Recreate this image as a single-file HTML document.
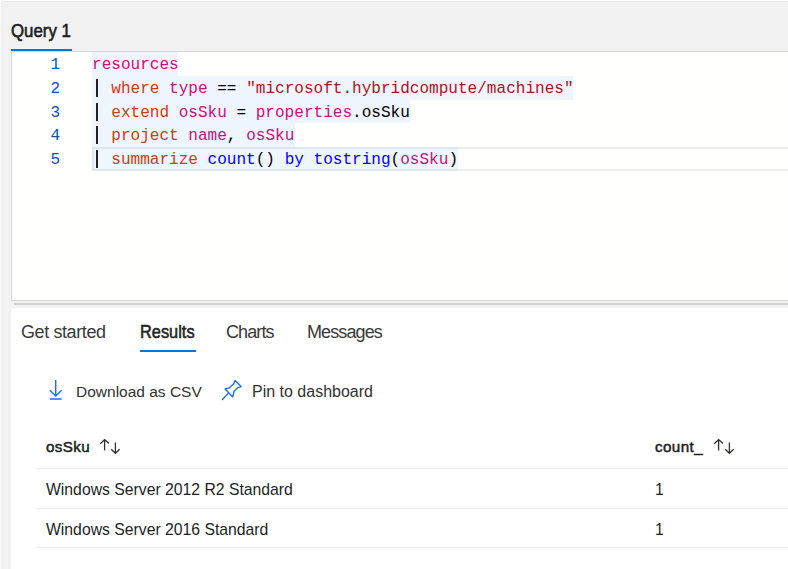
<!DOCTYPE html>
<html><head><meta charset="utf-8">
<style>
*{margin:0;padding:0;box-sizing:border-box}
html,body{width:788px;height:569px;overflow:hidden;background:#f2f2f2;font-family:"Liberation Sans",sans-serif}
.abs{position:absolute}
#topline{left:0;top:0;width:788px;height:1px;background:#fbfbfb}
#topline2{left:0;top:1px;width:788px;height:1px;background:#e9e9e9}
#leftline{left:0;top:0;width:1px;height:569px;background:#fbfbfb}
#qtab{left:11px;top:21px;font-size:18.2px;-webkit-text-stroke:0.6px #201f1e;transform:scaleX(0.925);transform-origin:0 0;color:#201f1e;white-space:nowrap;line-height:20px}
#qbar{left:11px;top:49px;width:61px;height:2px;background:#0078d4}
#editor{left:11px;top:51px;width:800px;height:250px;background:#fffffe;border:1px solid #d6d6d6;border-right:none}
.ln{position:absolute;left:40px;width:20px;text-align:right;font-family:"Liberation Mono",monospace;font-size:16px;color:#0b52b0;line-height:26px;height:24px}
.code{position:absolute;left:92px;font-family:"Liberation Mono",monospace;font-size:16.06px;line-height:26px;height:24px;white-space:pre;color:#000}
.sel{position:absolute;left:92px;background:#eff5fd}
#cur{left:92px;top:147px;width:720px;height:24px;border:2px solid #eeeeee;border-right:none}
.pipe{position:absolute;left:96px;width:2px;height:18px;background:#222}
.k{color:#c8107a}
.o{color:#cc3d0a}
.s{color:#a8161a}
.b{color:#0000ff}
#splitter{left:14px;top:303px;width:780px;height:2px;background:#d2d2d2}
#bottom{left:11px;top:308px;width:800px;height:300px;background:#ffffff}
.tab{position:absolute;top:319px;font-size:18px;letter-spacing:-0.4px;color:#3a3938;white-space:nowrap;line-height:26px}
#rbar{left:140px;top:350px;width:56px;height:2px;background:#0078d4}
.tb{position:absolute;top:382px;font-size:15.5px;color:#323130;white-space:nowrap;line-height:20px}
.th{position:absolute;top:437px;font-size:15.2px;letter-spacing:0.4px;-webkit-text-stroke:0.5px #201f1e;color:#201f1e;white-space:nowrap;line-height:20px}
.td{position:absolute;font-size:15.75px;color:#201f1e;white-space:nowrap;line-height:20px}
.hr{position:absolute;left:36px;width:760px;height:1px;background:#ebebeb}
</style></head><body>
<div id="topline" class="abs"></div>
<div id="topline2" class="abs"></div>
<div id="leftline" class="abs"></div>
<div id="qtab" class="abs">Query 1</div>
<div id="qbar" class="abs"></div>
<div id="editor" class="abs"></div>
<div class="abs" style="left:0;top:0">
  <div class="sel" style="top:52px;width:86px;height:24px"></div>
  <div class="sel" style="top:76px;width:481px;height:24px"></div>
  <div class="sel" style="top:100px;width:318px;height:23px"></div>
  <div class="sel" style="top:123px;width:203px;height:24px"></div>
  <div id="cur" class="abs"></div>
  <div class="sel" style="top:147px;width:366px;height:24px;background:rgba(0,100,230,0.06)"></div>
  <div class="ln" style="top:52px">1</div>
  <div class="ln" style="top:75.75px">2</div>
  <div class="ln" style="top:99.5px">3</div>
  <div class="ln" style="top:123.25px">4</div>
  <div class="ln" style="top:147px">5</div>
  <div class="code" style="top:52px"><span class="k">resources</span></div>
  <div class="code" style="top:75.75px">  <span class="o">where</span> <span class="k">type</span> == <span class="s">"microsoft.hybridcompute/machines"</span></div>
  <div class="code" style="top:99.5px">  <span class="o">extend</span> <span class="k">osSku</span> = <span class="k">properties</span>.osSku</div>
  <div class="code" style="top:123.25px">  <span class="o">project</span> <span class="k">name</span>, <span class="k">osSku</span></div>
  <div class="code" style="top:147px">  <span class="o">summarize</span> <span class="b">count</span>() <span class="b">by</span> <span class="b">tostring</span>(<span class="k">osSku</span>)</div>
  <div class="pipe" style="top:78.75px"></div>
  <div class="pipe" style="top:102.5px"></div>
  <div class="pipe" style="top:126.25px"></div>
  <div class="pipe" style="top:150px"></div>
</div>
<div id="splitter" class="abs"></div>
<div id="bottom" class="abs"></div>
<div class="tab" style="left:21px">Get started</div>
<div class="tab" style="left:140px;color:#252423;-webkit-text-stroke:0.55px #252423;font-size:17.6px;letter-spacing:0;transform:scaleX(0.93);transform-origin:0 0">Results</div>
<div class="tab" style="left:226px;letter-spacing:-0.9px">Charts</div>
<div class="tab" style="left:307px;letter-spacing:-0.9px">Messages</div>
<div id="rbar" class="abs"></div>

<svg class="abs" style="left:44px;top:376px" width="24" height="28" viewBox="0 0 24 28">
  <path d="M11.7 4 V19.6 M5.8 14.2 L11.7 20 L17.6 14.2 M5.8 23 H17.6" fill="none" stroke="#1a73e0" stroke-width="1.4"/>
</svg>
<div class="tb" style="left:76px">Download as CSV</div>
<svg class="abs" style="left:218px;top:376px" width="28" height="28" viewBox="0 0 28 28">
  <path d="M4.4 23.4 L10.1 17.5" fill="none" stroke="#1a73e0" stroke-width="1.4" stroke-linecap="round"/>
  <path d="M7.1 13 L11.3 11.8 L15.6 7.9 L17 4.6 L23.1 10.6 L19.9 11.6 L16 15.6 L14.8 20.9 Z" fill="none" stroke="#1a73e0" stroke-width="1.4" stroke-linejoin="round"/>
</svg>
<div class="tb" style="left:252px;font-size:16px">Pin to dashboard</div>

<div class="th" style="left:46px">osSku</div>
<div class="th" style="left:655px">count_</div>
<svg class="abs" style="left:99.6px;top:437px" width="22" height="19" viewBox="0 0 22 19"><path d="M4.6 2.9 V13.6 M0.3 6.7 L4.6 2.6 L9 6.6 M15.4 5.5 V16.4 M11.2 12.2 L15.4 16.3 L19.6 12.2" fill="none" stroke="#323130" stroke-width="1.3"/></svg>
<svg class="abs" style="left:714px;top:437px" width="22" height="19" viewBox="0 0 22 19"><path d="M4.6 2.9 V13.6 M0.3 6.7 L4.6 2.6 L9 6.6 M15.4 5.5 V16.4 M11.2 12.2 L15.4 16.3 L19.6 12.2" fill="none" stroke="#323130" stroke-width="1.3"/></svg>
<div class="hr" style="top:468px"></div>
<div class="td" style="left:46px;top:480px">Windows Server 2012 R2 Standard</div>
<div class="td" style="left:655px;top:480px">1</div>
<div class="hr" style="top:508px"></div>
<div class="td" style="left:46px;top:520px">Windows Server 2016 Standard</div>
<div class="td" style="left:655px;top:520px">1</div>
<div class="hr" style="top:547px"></div>
</body></html>
